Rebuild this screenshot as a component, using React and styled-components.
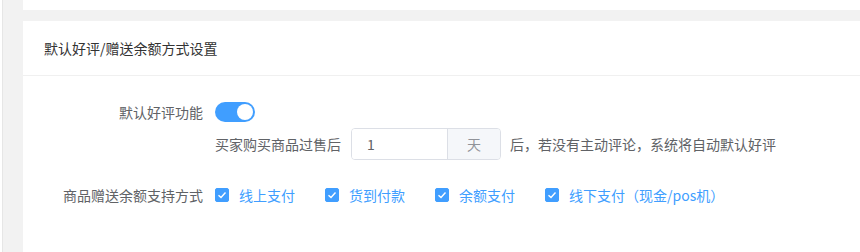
import React, { useState } from "react";
import styled, { createGlobalStyle } from "styled-components";

const Global = createGlobalStyle`
  html, body { margin: 0; padding: 0; background: #fff; }
  body { font-family: "Microsoft YaHei", "Noto Sans CJK SC", "Liberation Sans", sans-serif; }
  #root { height: 252px; overflow: hidden; }
`;

const Page = styled.div`
  margin-left: 2px;
  height: 252px;
  border-left: 1px solid #e6e6e6;
  background: #f2f2f2;
  padding-left: 20px;
  display: flex;
  flex-direction: column;
  gap: 11px;
  box-sizing: border-box;
`;

const PrevCard = styled.div`
  height: 10px;
  background: #fff;
  flex: none;
`;

const Card = styled.div`
  background: #fff;
  flex: 1;
  display: flex;
  flex-direction: column;
`;

const CardHeader = styled.div`
  height: 55px;
  box-sizing: border-box;
  border-bottom: 1px solid #f0f0f0;
  padding: 0 21px;
  display: flex;
  align-items: center;
  font-size: 14px;
  color: #333;
`;

const CardBody = styled.div`
  padding: 20px 0 0 0;
  display: flex;
  flex-direction: column;
`;

const FormItem = styled.div`
  display: flex;
  align-items: flex-start;
  margin-bottom: ${(p) => p.$mb || 0}px;
`;

const Label = styled.div`
  width: 192px;
  box-sizing: border-box;
  padding-right: 12px;
  text-align: right;
  font-size: 14px;
  color: #606266;
  line-height: 32px;
  flex: none;
`;

const Content = styled.div`
  display: flex;
  flex-direction: column;
`;

const Line = styled.div`
  display: flex;
  align-items: center;
  height: ${(p) => p.$h || 32}px;
  font-size: 14px;
  color: #606266;
`;

const SwitchTrack = styled.span`
  width: 40px;
  height: 20px;
  border-radius: 10px;
  background: ${(p) => (p.$on ? "#409eff" : "#dcdfe6")};
  position: relative;
  cursor: pointer;
  display: inline-block;
  transition: background 0.2s;
  &::after {
    content: "";
    position: absolute;
    top: 2px;
    left: ${(p) => (p.$on ? "22px" : "2px")};
    width: 16px;
    height: 16px;
    border-radius: 50%;
    background: #fff;
    transition: left 0.2s;
  }
`;

const InputGroup = styled.div`
  display: flex;
  height: 32px;
  margin: 0 9px 0 10px;
  box-sizing: border-box;
  border: 1px solid #dcdfe6;
  border-radius: 4px;
  overflow: hidden;
`;

const Input = styled.input`
  width: 80px;
  border: none;
  outline: none;
  padding: 0 0 0 15px;
  font-size: 14px;
  color: #606266;
  font-family: inherit;
  background: #fff;
`;

const Append = styled.div`
  width: 52px;
  border-left: 1px solid #dcdfe6;
  background: #f5f7fa;
  color: #909399;
  display: flex;
  align-items: center;
  justify-content: center;
  font-size: 14px;
`;

const CheckLabel = styled.label`
  display: inline-flex;
  align-items: center;
  margin-right: 30px;
  font-size: 14px;
  color: ${(p) => (p.$on ? "#409eff" : "#606266")};
  cursor: pointer;
`;

const Box = styled.span`
  width: 14px;
  height: 14px;
  box-sizing: border-box;
  border-radius: 2px;
  border: 1px solid ${(p) => (p.$on ? "#409eff" : "#dcdfe6")};
  background: ${(p) => (p.$on ? "#409eff" : "#fff")};
  display: inline-flex;
  align-items: center;
  justify-content: center;
  margin-right: 10px;
`;

const options = ["线上支付", "货到付款", "余额支付", "线下支付（现金/pos机）"];

export default function App() {
  const [on, setOn] = useState(true);
  const [days, setDays] = useState("1");
  const [checked, setChecked] = useState([true, true, true, true]);
  return (
    <>
      <Global />
      <Page>
        <PrevCard />
        <Card>
          <CardHeader>默认好评/赠送余额方式设置</CardHeader>
          <CardBody>
            <FormItem $mb={19}>
              <Label>默认好评功能</Label>
              <Content>
                <Line>
                  <SwitchTrack $on={on} onClick={() => setOn(!on)} />
                </Line>
                <Line>
                  买家购买商品过售后
                  <InputGroup>
                    <Input value={days} onChange={(e) => setDays(e.target.value)} />
                    <Append>天</Append>
                  </InputGroup>
                  后，若没有主动评论，系统将自动默认好评
                </Line>
              </Content>
            </FormItem>
            <FormItem>
              <Label>商品赠送余额支持方式</Label>
              <Content>
                <Line>
                  {options.map((o, i) => (
                    <CheckLabel
                      key={o}
                      $on={checked[i]}
                      onClick={() => setChecked(checked.map((c, j) => (j === i ? !c : c)))}
                    >
                      <Box $on={checked[i]}>
                        {checked[i] && (
                          <svg width="10" height="8" viewBox="0 0 10 8">
                            <path d="M1.5 4.2 L4 6.5 L8.5 1.5" fill="none" stroke="#fff" strokeWidth="1.4" />
                          </svg>
                        )}
                      </Box>
                      {o}
                    </CheckLabel>
                  ))}
                </Line>
              </Content>
            </FormItem>
          </CardBody>
        </Card>
      </Page>
    </>
  );
}
